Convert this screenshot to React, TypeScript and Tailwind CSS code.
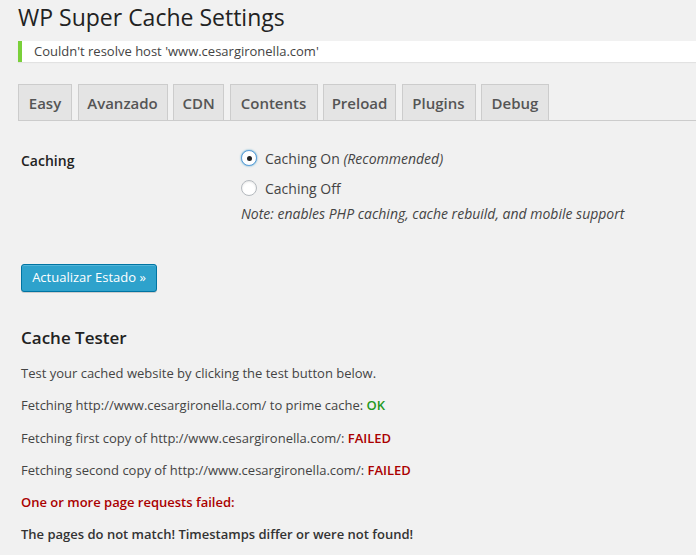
import React from 'react';

const tabs = [
  { label: 'Easy', w: 'w-[54px]' },
  { label: 'Avanzado', w: 'w-[90px]' },
  { label: 'CDN', w: 'w-[51px]' },
  { label: 'Contents', w: 'w-[88px]' },
  { label: 'Preload', w: 'w-[73px]' },
  { label: 'Plugins', w: 'w-[74px]' },
  { label: 'Debug', w: 'w-[68px]' },
];

function Radio({ checked }: { checked?: boolean }) {
  return (
    <span
      className={`flex h-[16px] w-[16px] shrink-0 items-center justify-center rounded-full border bg-white ${
        checked ? 'border-[#5b9dd9] shadow-[0_0_2px_rgba(30,140,190,0.8)]' : 'border-[#b4b9be] shadow-[inset_0_1px_2px_rgba(0,0,0,0.1)]'
      }`}
    >
      {checked && <span className="h-[5px] w-[5px] rounded-full bg-[#222]" />}
    </span>
  );
}

export default function App() {
  return (
    <div className="min-h-[555px] overflow-hidden bg-[#f1f1f1] font-['Open_Sans',sans-serif] text-[13px] text-[#444]">
      <div className="pl-[18px]">
        <h2 className="pt-[3px] text-[23px] leading-[29px] text-[#222]">WP Super Cache Settings</h2>

        <div className="mt-[9px] flex h-[21px] items-center border-l-4 border-[#7ad03a] bg-white pl-[12px] shadow-[0_1px_1px_rgba(0,0,0,0.06)]">
          Couldn't resolve host 'www.cesargironella.com'
        </div>

        <div className="mt-[22px] flex items-end gap-[5.5px] border-b border-[#ccc]">
          {tabs.map((t) => (
            <div
              key={t.label}
              className={`${t.w} flex h-[36px] items-center justify-center border border-b-0 border-[#ccc] bg-[#e4e4e4] pt-[1px] text-[15px] font-semibold text-[#555]`}
            >
              {t.label}
            </div>
          ))}
        </div>

        <div className="pl-[3px]">
          <div className="mt-[28px] flex items-start">
            <div className="mt-[2px] w-[220px] pt-[1px] text-[14px] font-semibold leading-[18px] text-[#222]">Caching</div>
            <div className="flex flex-col text-[14px]">
              <label className="flex h-[18px] items-center gap-[8px]">
                <Radio checked />
                <span>
                  Caching On <em>(Recommended)</em>
                </span>
              </label>
              <label className="mt-[12px] flex h-[18px] items-center gap-[8px]">
                <Radio />
                <span>Caching Off</span>
              </label>
              <p className="mt-[8px] italic leading-[18px]">
                Note: enables PHP caching, cache rebuild, and mobile support
              </p>
            </div>
          </div>

          <button className="mt-[41px] h-[28px] w-[136px] rounded-[3px] border border-[#0074a2] bg-[#2ea2cc] text-[13px] text-white shadow-[inset_0_1px_0_rgba(120,200,230,0.5),0_1px_0_rgba(0,0,0,0.15)]">
            Actualizar Estado »
          </button>

          <h3 className="mt-[35px] text-[17px] font-semibold leading-[22px] text-[#222]">Cache Tester</h3>

          <div className="mt-[15px] flex flex-col gap-[12.8px] leading-[19.5px]">
            <p>Test your cached website by clicking the test button below.</p>
            <p>
              Fetching http://www.cesargironella.com/ to prime cache:{' '}
              <span className="font-semibold text-[#229922]">OK</span>
            </p>
            <p>
              Fetching first copy of http://www.cesargironella.com/:{' '}
              <span className="font-semibold text-[#aa0000]">FAILED</span>
            </p>
            <p>
              Fetching second copy of http://www.cesargironella.com/:{' '}
              <span className="font-semibold text-[#aa0000]">FAILED</span>
            </p>
            <p className="font-semibold text-[#aa0000]">One or more page requests failed:</p>
            <p className="font-semibold text-[#333]">The pages do not match! Timestamps differ or were not found!</p>
          </div>
        </div>
      </div>
    </div>
  );
}
